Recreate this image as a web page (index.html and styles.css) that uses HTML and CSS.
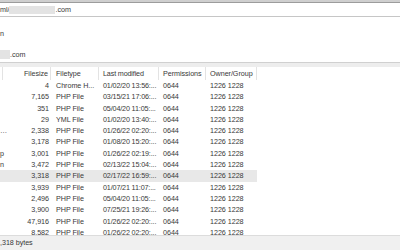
FILE: index.html
```html
<!DOCTYPE html>
<html>
<head>
<meta charset="utf-8">
<link rel="stylesheet" href="styles.css">
</head>
<body>
<div class="app">
  <div class="topstrip"></div>
  <div class="pathbar"><span>ml/</span><span class="blur blur-path"></span><span>.com</span></div>
  <div class="tree">
    <div class="tree-item t1">n</div>
    <div class="tree-item t2"><span class="blur blur-tree"></span><span>.com</span></div>
  </div>
  <div class="splitter"></div>
  <div class="list">
    <div class="row head">
      <div class="c name"></div>
      <div class="c size">Filesize</div>
      <div class="c type">Filetype</div>
      <div class="c mod">Last modified</div>
      <div class="c perm">Permissions</div>
      <div class="c own">Owner/Group</div>
    </div>
    <div class="row"><div class="c name"></div><div class="c size">4</div><div class="c type">Chrome H...</div><div class="c mod">01/02/20 13:56:...</div><div class="c perm">0644</div><div class="c own">1226 1228</div></div>
    <div class="row"><div class="c name"></div><div class="c size">7,165</div><div class="c type">PHP File</div><div class="c mod">03/15/21 17:06:...</div><div class="c perm">0644</div><div class="c own">1226 1228</div></div>
    <div class="row"><div class="c name"></div><div class="c size">351</div><div class="c type">PHP File</div><div class="c mod">05/04/20 11:05:...</div><div class="c perm">0644</div><div class="c own">1226 1228</div></div>
    <div class="row"><div class="c name"></div><div class="c size">29</div><div class="c type">YML File</div><div class="c mod">01/02/20 13:40:...</div><div class="c perm">0644</div><div class="c own">1226 1228</div></div>
    <div class="row"><div class="c name">…</div><div class="c size">2,338</div><div class="c type">PHP File</div><div class="c mod">01/26/22 02:20:...</div><div class="c perm">0644</div><div class="c own">1226 1228</div></div>
    <div class="row"><div class="c name"></div><div class="c size">3,178</div><div class="c type">PHP File</div><div class="c mod">01/08/20 15:20:...</div><div class="c perm">0644</div><div class="c own">1226 1228</div></div>
    <div class="row"><div class="c name">p</div><div class="c size">3,001</div><div class="c type">PHP File</div><div class="c mod">01/26/22 02:19:...</div><div class="c perm">0644</div><div class="c own">1226 1228</div></div>
    <div class="row"><div class="c name">n</div><div class="c size">3,472</div><div class="c type">PHP File</div><div class="c mod">02/13/22 15:04:...</div><div class="c perm">0644</div><div class="c own">1226 1228</div></div>
    <div class="row sel"><div class="c name"></div><div class="c size">3,318</div><div class="c type">PHP File</div><div class="c mod">02/17/22 16:59:...</div><div class="c perm">0644</div><div class="c own">1226 1228</div></div>
    <div class="row"><div class="c name"></div><div class="c size">3,939</div><div class="c type">PHP File</div><div class="c mod">01/07/21 11:07:...</div><div class="c perm">0644</div><div class="c own">1226 1228</div></div>
    <div class="row"><div class="c name"></div><div class="c size">2,496</div><div class="c type">PHP File</div><div class="c mod">05/04/20 11:05:...</div><div class="c perm">0644</div><div class="c own">1226 1228</div></div>
    <div class="row"><div class="c name"></div><div class="c size">3,900</div><div class="c type">PHP File</div><div class="c mod">07/25/21 19:26:...</div><div class="c perm">0644</div><div class="c own">1226 1228</div></div>
    <div class="row"><div class="c name"></div><div class="c size">47,916</div><div class="c type">PHP File</div><div class="c mod">01/26/22 02:20:...</div><div class="c perm">0644</div><div class="c own">1226 1228</div></div>
    <div class="row"><div class="c name"></div><div class="c size">8,582</div><div class="c type">PHP File</div><div class="c mod">01/26/22 02:20:...</div><div class="c perm">0644</div><div class="c own">1226 1228</div></div>
  </div>
  <div class="status">,318 bytes</div>
</div>
</body>
</html>
```
FILE: styles.css
```css
html, body {
  margin: 0;
  padding: 0;
  background: #ffffff;
}
.app {
  width: 400px;
  height: 250px;
  overflow: hidden;
  display: flex;
  flex-direction: column;
  font-family: "Liberation Sans", Arial, sans-serif;
  font-size: 7.2px;
  letter-spacing: -0.05px;
  color: #383838;
}
.topstrip {
  height: 2px;
  background: #cfcfcf;
  flex: none;
}
.pathbar {
  height: 13px;
  flex: none;
  border-top: 1px solid #9c9c9c;
  border-bottom: 1px solid #c6c6c6;
  background: #ffffff;
  display: flex;
  align-items: center;
  white-space: nowrap;
  line-height: 13px;
}
.blur {
  display: inline-block;
  background: #e3e3e3;
}
.blur-path {
  width: 46px;
  height: 8px;
}
.tree {
  height: 45px;
  flex: none;
  position: relative;
}
.tree-item {
  position: absolute;
  left: 0;
  display: flex;
  align-items: center;
  height: 11px;
  line-height: 11px;
}
.t1 { top: 11px; }
.t2 { top: 32px; }
.blur-tree {
  width: 10px;
  height: 9px;
}
.splitter {
  flex: none;
  height: 4px;
  border-top: 1px solid #d0d0d0;
  background: #ededed;
}
.list {
  flex: 1;
  overflow: hidden;
  display: flex;
  flex-direction: column;
}
.row {
  display: grid;
  grid-template-columns: 3px 48px 48px 60px 47px 51px;
  height: 11.3px;
  line-height: 11.3px;
  flex: none;
  white-space: nowrap;
}
.row.head {
  height: 13px;
  line-height: 13px;
  width: 257px;
}
.row.head .c {
  border-right: 1px solid #e3e3e3;
}
.row.sel {
  background: #e8e8e8;
  width: 257px;
}
.c {
  overflow: hidden;
  padding-left: 4px;
  box-sizing: border-box;
}
.c.name {
  padding-left: 0;
  overflow: visible;
}
.c.size {
  text-align: right;
  padding-left: 0;
  padding-right: 2px;
}
.c.type { padding-left: 5px; }
.c.mod { letter-spacing: -0.15px; }
.c.own { padding-left: 4px; }
.status {
  flex: none;
  height: 14px;
  line-height: 14px;
  background: #f0f0f0;
  border-top: 1px solid #dcdcdc;
  white-space: nowrap;
}
```
